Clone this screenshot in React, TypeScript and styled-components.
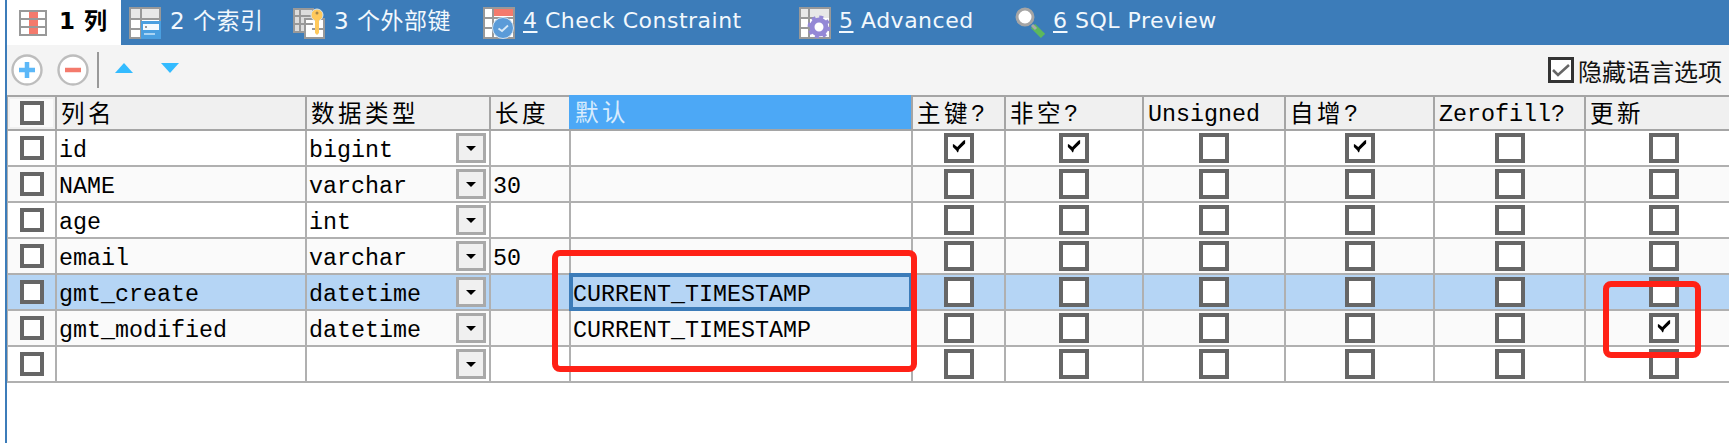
import React from "react";
import styled, { createGlobalStyle } from "styled-components";

const Global = createGlobalStyle`
  html, body { margin: 0; padding: 0; background: #fff; }
  body { font-family: "Liberation Mono", "Noto Sans CJK SC", monospace; overflow: hidden; }
`;

const COLUMNS = "49px 250px 184px 80px 342px 93px 138px 142px 149px 151px 155px";

const Page = styled.div`
  position: relative;
  width: 1729px;
  height: 443px;
  padding-left: 5px;
  box-sizing: border-box;
  overflow: hidden;
`;
const Main = styled.main`
  height: 100%;
  border-left: 2px solid #3c7cb9;
  display: flex;
  flex-direction: column;
`;
const TabBar = styled.nav`
  display: flex;
  height: 45px;
  background: #3c7cb9;
`;
const Tab = styled.div<{ $width: number; $active?: boolean }>`
  width: ${(p) => p.$width}px;
  box-sizing: border-box;
  padding-left: ${(p) => (p.$active ? 12 : 8)}px;
  display: flex;
  align-items: center;
  gap: ${(p) => (p.$active ? 12 : 9)}px;
  flex: none;
  background: ${(p) => (p.$active ? "#fff" : "transparent")};
  color: ${(p) => (p.$active ? "#000" : "#f2f8fd")};
  font: ${(p) => (p.$active ? "700" : "400")} 22px "DejaVu Sans", "Noto Sans CJK SC", sans-serif;
  letter-spacing: 0.5px;
  white-space: pre;
`;
const TabLabel = styled.span`
  display: inline-block;
  transform: translateY(-2px);
  margin-left: -1px;
`;
const HanTabLabel = styled(TabLabel)`
  font-size: 23px;
  transform: translateY(-4px);
  margin-left: 0;
`;
const Num = styled.span`
  text-decoration: underline;
  text-underline-offset: 3px;
`;
const Toolbar = styled.div`
  height: 50px;
  background: #f4f4f4;
  display: flex;
  align-items: center;
  padding-left: 4px;
`;
const ToolButton = styled.div`
  width: 32px;
  height: 32px;
  margin-right: 14px;
  flex: none;
  display: flex;
`;
const Divider = styled.div`
  width: 2px;
  height: 36px;
  background: #999;
  margin: 0 16px 0 -6px;
  flex: none;
`;
const Arrow = styled.div<{ $down?: boolean }>`
  width: 0;
  height: 0;
  border-left: 9px solid transparent;
  border-right: 9px solid transparent;
  border-${(p) => (p.$down ? "top" : "bottom")}: 10px solid #33bbff;
  margin-right: 28px;
  flex: none;
  transform: translateY(-2px);
`;
const HideOption = styled.label`
  margin-left: auto;
  margin-right: 7px;
  display: flex;
  align-items: center;
  gap: 4px;
  font: 400 24px "Noto Sans CJK SC", sans-serif;
  color: #111;
`;
const OptionBox = styled.span`
  width: 26px;
  height: 26px;
  box-sizing: border-box;
  border: 3px solid #333;
  background: #fff;
  display: flex;
  align-items: center;
  justify-content: center;
`;
const Grid = styled.div`
  display: flex;
  flex-direction: column;
`;
const HeaderRow = styled.div`
  display: grid;
  grid-template-columns: ${COLUMNS};
  background: #f0f0f0;
  border-top: 2px solid #a5a5a5;
  border-bottom: 2px solid #a5a5a5;
  border-left: 1px solid #a5a5a5;
`;
const HeaderCell = styled.div<{ $active?: boolean }>`
  height: ${(p) => (p.$active ? 34 : 32)}px;
  box-sizing: border-box;
  border-right: 2px solid #a5a5a5;
  padding-left: ${(p) => (p.$active ? 6 : 4)}px;
  margin: ${(p) => (p.$active ? "-2px 0 0 -2px" : "0")};
  display: flex;
  align-items: center;
  background: ${(p) => (p.$active ? "#4ca8f6" : "transparent")};
  color: ${(p) => (p.$active ? "#d8ecfd" : "#000")};
  font-size: 23.33px;
  white-space: pre;
  &:last-child { border-right: none; }
`;
const Latin = styled.span`
  transform: translateY(2px);
`;
const Han = styled.span`
  font-family: "Noto Sans CJK SC", sans-serif;
  font-size: 23.5px;
  letter-spacing: 3.5px;
  transform: translateY(-1px);
`;
const HeaderBoxCell = styled.div`
  border-right: 2px solid #a5a5a5;
  height: 32px;
  display: flex;
  align-items: center;
  justify-content: center;
`;
const HeaderBoxBack = styled.div`
  width: 43px;
  height: 28px;
  background: #fafafa;
  display: flex;
  align-items: center;
  justify-content: center;
`;
const Row = styled.div<{ $tone: "white" | "soft" | "selected" }>`
  display: grid;
  grid-template-columns: ${COLUMNS};
  height: 36px;
  box-sizing: border-box;
  border-bottom: 2px solid #b0b0b0;
  border-left: 1px solid #b0b0b0;
  background: ${(p) => (p.$tone === "selected" ? "#b5d5f5" : p.$tone === "soft" ? "#fafafa" : "#fff")};
`;
const Cell = styled.div<{ $focused?: boolean }>`
  position: relative;
  box-sizing: border-box;
  border-right: 2px solid #b0b0b0;
  padding: 0 3px 0 2px;
  display: flex;
  align-items: center;
  font-size: 23.33px;
  color: #000;
  white-space: pre;
  box-shadow: ${(p) => (p.$focused ? "inset 0 0 0 2px #3c7cb9, 0 0 0 2px #3c7cb9" : "none")};
  z-index: ${(p) => (p.$focused ? 1 : 0)};
  &:last-child { border-right: none; }
`;
const CellText = styled.span`
  transform: translateY(3px);
`;
const BoxCell = styled(Cell)`
  justify-content: center;
  padding: 0;
`;
const SmallBox = styled.span`
  width: 24px;
  height: 24px;
  box-sizing: border-box;
  border: 4px solid #666;
  background: #fff;
  display: block;
  flex: none;
`;
const Box = styled.span`
  width: 30px;
  height: 30px;
  box-sizing: border-box;
  border: 4px solid #666;
  background: #fff;
  display: flex;
  justify-content: center;
  padding-top: 2px;
  flex: none;
`;
const Combo = styled.span`
  width: 30px;
  height: 30px;
  margin-left: auto;
  box-sizing: border-box;
  border: 3px solid #a9a9a9;
  background: #f0f0f0;
  display: flex;
  align-items: center;
  justify-content: center;
  flex: none;
  &::after {
    content: "";
    border-left: 5px solid transparent;
    border-right: 5px solid transparent;
    border-top: 5px solid #000;
  }
`;
const Annotation = styled.div<{ $x: number; $y: number; $w: number; $h: number }>`
  position: absolute;
  left: ${(p) => p.$x}px;
  top: ${(p) => p.$y}px;
  width: ${(p) => p.$w}px;
  height: ${(p) => p.$h}px;
  box-sizing: border-box;
  border: 6px solid #ff2116;
  border-radius: 8px;
  z-index: 3;
`;

const Check = () => (
  <svg width="14" height="14" viewBox="0 0 16 16">
    <path d="M1 6 L2 6 L6 9 L13 2 L15 1 L15 5 L8 12 L7 15 L6 15 L5 13 L1 9 Z" fill="#000" />
  </svg>
);
const GrayCheck = () => (
  <svg width="18" height="14" viewBox="0 0 18 14">
    <path d="M1 7 L6 12 L17 2" fill="none" stroke="#666" strokeWidth="2.6" />
  </svg>
);

const GridLines = ({ x, y, w, h }: { x: number; y: number; w: number; h: number }) => (
  <g shapeRendering="crispEdges">
    <rect x={x + 1} y={y + 1} width={w - 2} height={h - 2} fill="#fff" stroke="#999" strokeWidth="2" />
    <path
      d={`M${x} ${y + h / 3}H${x + w}M${x} ${y + (2 * h) / 3}H${x + w}M${x + w * 0.32} ${y}V${y + h}`}
      stroke="#999"
      strokeWidth="2"
      fill="none"
    />
  </g>
);

const ColumnsIcon = () => (
  <svg width="28" height="26" viewBox="0 0 28 26" shapeRendering="crispEdges">
    <rect x="1" y="1" width="26" height="24" fill="#fff" stroke="#999" strokeWidth="2" />
    <rect x="10" y="2" width="9" height="22" fill="#f47a6c" />
    <path d="M0 9H28M0 17H28" stroke="#999" strokeWidth="2" />
  </svg>
);
const IndexIcon = () => (
  <svg width="32" height="32" viewBox="0 0 32 32" shapeRendering="crispEdges">
    <rect x="1" y="1" width="30" height="30" fill="#fff" stroke="#999" strokeWidth="2" />
    <rect x="2" y="2" width="28" height="10" fill="#e8e8e8" />
    <path d="M0 12H32M0 22H12M12 0V32" stroke="#999" strokeWidth="2" />
    <rect x="12" y="14" width="20" height="18" fill="#4a9fe0" />
    <rect x="14" y="17" width="16" height="6" fill="#f4fafe" />
    <rect x="15" y="26" width="11" height="2" fill="#a9d4f3" />
    <rect x="16" y="19" width="2" height="2" fill="#999" />
  </svg>
);
const ForeignKeyIcon = () => (
  <svg width="32" height="32" viewBox="0 0 32 32">
    <g shapeRendering="crispEdges">
      <rect x="1" y="2" width="19" height="23" fill="#ddd" stroke="#999" strokeWidth="2" />
      <rect x="12" y="12" width="19" height="19" fill="#fff" stroke="#999" strokeWidth="2" />
      <path d="M0 9H20M0 17H20M7 1V25M19 22H31" stroke="#999" strokeWidth="2" />
    </g>
    <circle cx="24" cy="8" r="6" fill="#ffc95c" stroke="#d7e6f1" strokeWidth="1" />
    <circle cx="24" cy="6" r="1.5" fill="#a5854a" />
    <path d="M22 12H26V26L24 28L22 26Z" fill="#ffc95c" />
  </svg>
);
const CheckIcon = () => (
  <svg width="32" height="32" viewBox="0 0 32 32">
    <GridLines x={0} y={0} w={32} h={32} />
    <rect x="11" y="2" width="19" height="7" fill="#f47a6c" shapeRendering="crispEdges" />
    <circle cx="20" cy="21" r="10.5" fill="#5b9bd8" stroke="#cfe2f3" strokeWidth="1" />
    <path d="M15.5 21.5L19 24L25 18.5" fill="none" stroke="#d8e9f7" strokeWidth="1.8" />
  </svg>
);
const AdvancedIcon = () => (
  <svg width="32" height="32" viewBox="0 0 32 32">
    <g shapeRendering="crispEdges">
      <rect x="1" y="1" width="30" height="30" fill="#fff" stroke="#999" strokeWidth="2" />
      <rect x="2" y="2" width="28" height="9" fill="#e8e8e8" />
      <path d="M0 11H16M0 21H10M10 0V32" stroke="#999" strokeWidth="2" />
    </g>
    <circle cx="20" cy="20" r="7" fill="none" stroke="#9488d6" strokeWidth="5" />
    <circle cx="20" cy="20" r="10" fill="none" stroke="#9488d6" strokeWidth="3" strokeDasharray="4 3.85" />
  </svg>
);
const PreviewIcon = () => (
  <svg width="30" height="32" viewBox="0 0 30 32">
    <path d="M18 19L28 29" stroke="#5cb85c" strokeWidth="6" />
    <path d="M17 18L21 22" stroke="#a8a8a8" strokeWidth="3" />
    <circle cx="10" cy="10" r="8" fill="#fff" stroke="#a5a5a5" strokeWidth="3" />
  </svg>
);
const PlusIcon = () => (
  <svg width="32" height="32" viewBox="0 0 32 32">
    <circle cx="16" cy="16" r="14.5" fill="#fff" stroke="#bdbdbd" strokeWidth="2.4" />
    <path d="M16 8V24M8 16H24" stroke="#5cb8f8" strokeWidth="4.5" />
  </svg>
);
const MinusIcon = () => (
  <svg width="32" height="32" viewBox="0 0 32 32">
    <circle cx="16" cy="16" r="14.5" fill="#fff" stroke="#bdbdbd" strokeWidth="2.4" />
    <path d="M8 16H24" stroke="#f47a6c" strokeWidth="4.5" />
  </svg>
);

type RowData = {
  name: string;
  type: string;
  len: string;
  def: string;
  pk?: boolean;
  nn?: boolean;
  ai?: boolean;
  upd?: boolean;
  tone: "white" | "soft" | "selected";
};

const rows: RowData[] = [
  { name: "id", type: "bigint", len: "", def: "", pk: true, nn: true, ai: true, tone: "white" },
  { name: "NAME", type: "varchar", len: "30", def: "", tone: "soft" },
  { name: "age", type: "int", len: "", def: "", tone: "white" },
  { name: "email", type: "varchar", len: "50", def: "", tone: "soft" },
  { name: "gmt_create", type: "datetime", len: "", def: "CURRENT_TIMESTAMP", tone: "selected" },
  { name: "gmt_modified", type: "datetime", len: "", def: "CURRENT_TIMESTAMP", upd: true, tone: "soft" },
  { name: "", type: "", len: "", def: "", tone: "white" },
];

const Flag = ({ on }: { on?: boolean }) => (
  <BoxCell>
    <Box>{on ? <Check /> : null}</Box>
  </BoxCell>
);

export default function App() {
  return (
    <Page>
      <Global />
      <Main>
        <TabBar>
          <Tab $width={114} $active>
            <ColumnsIcon />
            <HanTabLabel>1 列</HanTabLabel>
          </Tab>
          <Tab $width={164}>
            <IndexIcon />
            <HanTabLabel>2 个索引</HanTabLabel>
          </Tab>
          <Tab $width={190}>
            <ForeignKeyIcon />
            <HanTabLabel>3 个外部键</HanTabLabel>
          </Tab>
          <Tab $width={316}>
            <CheckIcon />
            <TabLabel>
              <Num>4</Num> Check Constraint
            </TabLabel>
          </Tab>
          <Tab $width={216}>
            <AdvancedIcon />
            <TabLabel>
              <Num>5</Num> Advanced
            </TabLabel>
          </Tab>
          <Tab $width={240}>
            <PreviewIcon />
            <TabLabel>
              <Num>6</Num> SQL Preview
            </TabLabel>
          </Tab>
        </TabBar>
        <Toolbar>
          <ToolButton>
            <PlusIcon />
          </ToolButton>
          <ToolButton>
            <MinusIcon />
          </ToolButton>
          <Divider />
          <Arrow />
          <Arrow $down />
          <HideOption>
            <OptionBox>
              <GrayCheck />
            </OptionBox>
            隐藏语言选项
          </HideOption>
        </Toolbar>
        <Grid>
          <HeaderRow>
            <HeaderBoxCell>
              <HeaderBoxBack>
                <SmallBox />
              </HeaderBoxBack>
            </HeaderBoxCell>
            <HeaderCell><Han>列名</Han></HeaderCell>
            <HeaderCell><Han>数据类型</Han></HeaderCell>
            <HeaderCell><Han>长度</Han></HeaderCell>
            <HeaderCell $active><Han>默认</Han></HeaderCell>
            <HeaderCell><Han>主键</Han><Latin>?</Latin></HeaderCell>
            <HeaderCell><Han>非空</Han><Latin>?</Latin></HeaderCell>
            <HeaderCell><Latin>Unsigned</Latin></HeaderCell>
            <HeaderCell><Han>自增</Han><Latin>?</Latin></HeaderCell>
            <HeaderCell><Latin>Zerofill?</Latin></HeaderCell>
            <HeaderCell><Han>更新</Han></HeaderCell>
          </HeaderRow>
          {rows.map((r, i) => (
            <Row key={i} $tone={r.tone}>
              <BoxCell>
                <SmallBox />
              </BoxCell>
              <Cell><CellText>{r.name}</CellText></Cell>
              <Cell>
                <CellText>{r.type}</CellText>
                <Combo />
              </Cell>
              <Cell><CellText>{r.len}</CellText></Cell>
              <Cell $focused={r.tone === "selected"}><CellText>{r.def}</CellText></Cell>
              <Flag on={r.pk} />
              <Flag on={r.nn} />
              <Flag />
              <Flag on={r.ai} />
              <Flag />
              <Flag on={r.upd} />
            </Row>
          ))}
        </Grid>
      </Main>
      <Annotation $x={552} $y={250} $w={365} $h={122} />
      <Annotation $x={1603} $y={281} $w={98} $h={77} />
    </Page>
  );
}
